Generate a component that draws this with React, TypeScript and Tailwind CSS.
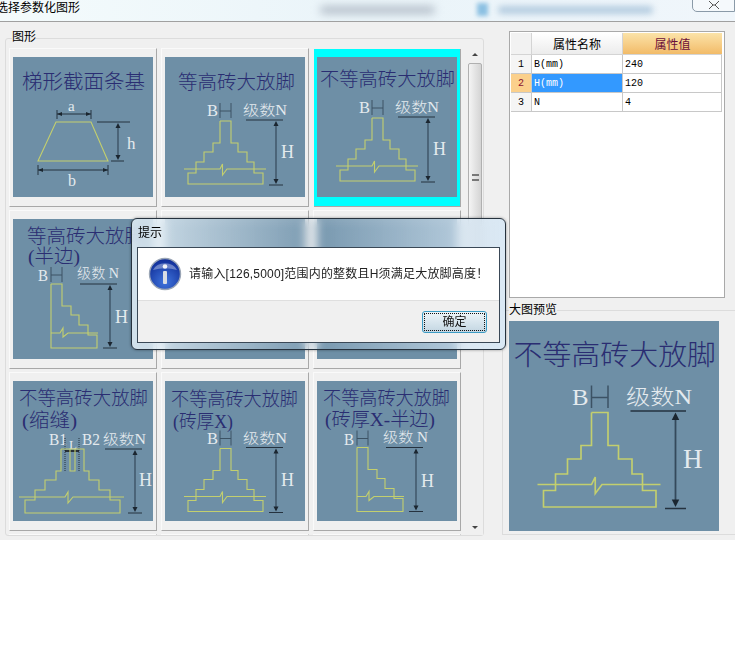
const YELLOW = "fill-none stroke-[#c3cf6e] stroke-[1.1]";
const serif = "font-['Liberation_Serif','Noto_Sans_CJK_SC',serif]";

const Title = ({ x, y, w, size = 19, children }: { x: number; y: number; w: number; size?: number; children: string }) => (
  <text x={x} y={y} fontSize={size} textLength={w} lengthAdjust="spacingAndGlyphs" className="fill-[#2a2d72] font-light">
    {children}
  </text>
);

const Label = ({ x, y, size = 16, w, children }: { x: number; y: number; size?: number; w?: number; children: string }) => (
  <text x={x} y={y} fontSize={size} textLength={w} lengthAdjust="spacingAndGlyphs" className="fill-[#e4eaee] font-light">
    {children}
  </text>
);

const VArrow = ({ x, y1, y2, t1, t2 }: { x: number; y1: number; y2: number; t1: number; t2: number }) => (
  <g>
    <line x1={t1} y1={y1} x2={x + 7} y2={y1} className="stroke-[#25323f]" />
    <line x1={x - 7} y1={y2} x2={t2} y2={y2} className="stroke-[#25323f]" />
    <line x1={x} y1={y1 + 3} x2={x} y2={y2 - 3} className="stroke-[#34495b] stroke-[1.2]" />
    <polygon points={`${x},${y1 + 1} ${x - 2.5},${y1 + 6} ${x + 2.5},${y1 + 6}`} className="fill-[#1b2630]" />
    <polygon points={`${x},${y2 - 1} ${x - 2.5},${y2 - 6} ${x + 2.5},${y2 - 6}`} className="fill-[#1b2630]" />
  </g>
);

const BDim = ({ x1, x2, y }: { x1: number; x2: number; y: number }) => (
  <g className="stroke-[#3c5264]">
    <line x1={x1} y1={y - 8} x2={x1} y2={y + 7} />
    <line x1={x2} y1={y - 8} x2={x2} y2={y + 7} />
    <line x1={x1} y1={y} x2={x2} y2={y} />
  </g>
);

// stepped footing, symmetric; dy moves it up or down in the picture
const Full = ({ dy = 0 }: { dy?: number }) => (
  <g transform={`translate(0 ${dy})`}>
    <Label x={42} y={59} w={11}>B</Label>
    <BDim x1={55} x2={66} y={54} />
    <Label x={78} y={58} size={14} w={44}>级数N</Label>
    <VArrow x={111} y1={63} y2={128} t1={81} t2={118} />
    <Label x={116} y={101} size={18}>H</Label>
    <polyline
      className={YELLOW}
      points="55,64 66,64 66,86 73,86 73,95 82,95 82,105 89,105 89,116 98,116 98,127 23,127 23,116 31,116 31,105 39,105 39,95 48,95 48,86 55,86 55,64"
    />
    <polyline className={YELLOW} points="19,112 55,112 57.5,107 57.5,118 62,112 101,112" />
  </g>
);

const Half = ({ dx = 0, dy = 0, spaced = false }: { dx?: number; dy?: number; spaced?: boolean }) => (
  <g transform={`translate(${dx} ${dy})`}>
    <Label x={25} y={62} w={10}>B</Label>
    <BDim x1={38} x2={49} y={56} />
    <Label x={64} y={59} size={14} w={spaced ? 45 : 42}>级数 N</Label>
    <VArrow x={97} y1={65} y2={129} t1={67} t2={104} />
    <Label x={102} y={104} size={18}>H</Label>
    <polyline
      className={YELLOW}
      points="38,65 49,65 49,87 58,87 58,96 66,96 66,106 75,106 75,116 84,116 84,129 38,129 38,65"
    />
    <polyline className={YELLOW} points="38,114 47,114 50,109 50,118 55,114 85,114" />
  </g>
);

const Trapezoid = () => (
  <g>
    <Title x={9} y={32} w={123} size={20}>梯形截面条基</Title>
    <Label x={55} y={54} size={15}>a</Label>
    <g className="stroke-[#25323f]">
      <line x1={44} y1={53} x2={44} y2={62} />
      <line x1={78} y1={53} x2={78} y2={62} />
      <line x1={44} y1={57} x2={78} y2={57} />
      <line x1={25} y1={108} x2={25} y2={118} />
      <line x1={95} y1={108} x2={95} y2={118} />
      <line x1={25} y1={113} x2={95} y2={113} />
    </g>
    <polygon points="44,57 49,55 49,59" className="fill-[#1b2630]" />
    <polygon points="78,57 73,55 73,59" className="fill-[#1b2630]" />
    <polygon points="25,113 30,111 30,115" className="fill-[#1b2630]" />
    <polygon points="95,113 90,111 90,115" className="fill-[#1b2630]" />
    <VArrow x={105} y1={65} y2={104} t1={84} t2={111} />
    <line x1={112} y1={65} x2={117} y2={65} className="stroke-[#25323f]" />
    <Label x={114} y={92} size={17}>h</Label>
    <Label x={55} y={129} size={16}>b</Label>
    <polygon points="43,65 78,65 95,104 25,104" className={YELLOW} />
  </g>
);

const Slot = () => (
  <g>
    <Label x={36} y={64} w={18}>B1</Label>
    <Label x={69} y={64} w={18}>B2</Label>
    <Label x={90} y={63} size={14} w={43}>级数N</Label>
    <Label x={56} y={68} size={13}>L</Label>
    <VArrow x={122} y1={68} y2={132} t1={92} t2={129} />
    <Label x={126} y={105} size={18}>H</Label>
    <line x1={52} y1={57} x2={52} y2={90} strokeDasharray="1 1" className="stroke-[#25323f]" />
    <line x1={66} y1={57} x2={66} y2={90} strokeDasharray="1 1" className="stroke-[#25323f]" />
    <line x1={52} y1={70} x2={66} y2={70} className="stroke-[#111] stroke-[1.5]" />
    <polyline
      className={YELLOW}
      points="48,68 71,68 71,90 76,90 76,99 86,99 86,109 97,109 97,119 107,119 107,132 12,132 12,119 22,119 22,109 32,109 32,99 43,99 43,90 48,90 48,68"
    />
    <polyline className={YELLOW} points="57,68 57,90 62,90 62,68" />
    <polyline className={YELLOW} points="6,116 52,116 55,111 55,122 60,116 111,116" />
  </g>
);

const Drawing = ({ size = 140, children }: { size?: number; children?: React.ReactNode }) => (
  <svg width={size} height={size} viewBox="0 0 140 140" className={`block bg-[#6e8fa6] ${serif}`}>
    {children}
  </svg>
);

const Card = ({ selected = false, children }: { selected?: boolean; children?: React.ReactNode }) => (
  <div
    className={
      selected
        ? "flex items-start justify-center pt-[8px] bg-[#00ffff] border-r border-b border-[#a8a8a8] ml-px mt-px"
        : "flex items-start justify-center pt-[8px] bg-[#f0f0f0] border-t border-l border-t-[#fafafa] border-l-[#fafafa] border-r border-b border-r-[#a8a8a8] border-b-[#a8a8a8]"
    }
  >
    {children}
  </div>
);

const rows = [
  { n: "1", name: "B(mm)", value: "240" },
  { n: "2", name: "H(mm)", value: "120" },
  { n: "3", name: "N", value: "4" },
];

const PropertyGrid = () => (
  <div className="h-[267px] w-[216px] border border-[#a9a9a9] bg-white p-px text-[10px] font-['Liberation_Mono','Noto_Sans_CJK_SC',monospace]">
    <div className="grid grid-cols-[21px_91px_99px] grid-rows-[22px_19px_19px_19px] text-black">
      <div className="bg-[#f2f2f2] border-r border-b border-[#d4d4d4]" />
      <div className="flex items-center justify-center bg-gradient-to-b from-white to-[#ececec] border-r border-b border-[#d4d4d4] font-['Noto_Sans_CJK_SC',sans-serif] text-xs">
        属性名称
      </div>
      <div className="flex items-center justify-center bg-gradient-to-b from-[#fbe3a8] to-[#f2bb68] border-b border-[#d4d4d4] font-['Noto_Sans_CJK_SC',sans-serif] text-xs text-[#6b0f3a]">
        属性值
      </div>
      {rows.map((r) => {
        const active = r.n === "2";
        return (
          <div key={r.n} className="contents">
            <div
              className={
                active
                  ? "flex items-center justify-center bg-[#fbd08c] text-[#8a1030] border-r border-b border-[#c8c8c8]"
                  : "flex items-center justify-center bg-[#f5f5f5] border-r border-b border-[#c8c8c8]"
              }
            >
              {r.n}
            </div>
            <div
              className={
                active
                  ? "flex items-center pl-[2px] bg-[#3399ff] text-white border-r border-b border-[#c8c8c8]"
                  : "flex items-center pl-[2px] border-r border-b border-[#c8c8c8]"
              }
            >
              {r.name}
            </div>
            <div className="flex items-center pl-[2px] border-r border-b border-[#c8c8c8]">{r.value}</div>
          </div>
        );
      })}
    </div>
  </div>
);

const InfoIcon = () => (
  <svg width="34" height="34" viewBox="0 0 34 34" className="shrink-0">
    <defs>
      <radialGradient id="infoBlue" cx="50%" cy="75%" r="70%">
        <stop offset="0%" stopColor="#3f74dc" />
        <stop offset="100%" stopColor="#12309a" />
      </radialGradient>
    </defs>
    <circle cx="17" cy="17" r="15.5" fill="url(#infoBlue)" stroke="#9aa5b5" strokeWidth="1.4" />
    <path d="M5 13 A13 11 0 0 1 29 13 A22 10 0 0 0 5 13 Z" fill="#ffffff" fillOpacity="0.35" />
    <circle cx="17" cy="9.5" r="2.3" fill="#f2f4f8" />
    <rect x="15" y="14" width="4" height="13" rx="1" fill="#d8dde4" />
  </svg>
);

const Dialog = () => (
  <div className="absolute left-[131px] top-[218px] flex h-[132px] w-[375px] flex-col rounded-[6px] border border-[#26323e] bg-gradient-to-r from-[#e4f0f8]/85 via-[#b9d4ea]/15 to-[#d5e6f4]/85 px-[5px] pb-[6px] shadow-[0_0_3px_rgba(0,0,0,0.4)] backdrop-blur-[5px]">
    <div className="flex h-[28px] shrink-0 items-center pl-px text-xs text-black">提示</div>
    <div className="flex flex-1 flex-col border border-[#3a4856] bg-[#f0f0f0]">
      <div className="flex h-[53px] items-center gap-[8px] bg-white pl-[10px] border-b border-[#dfdfdf] text-[12px] tracking-[0.2px] text-[#222]">
        <InfoIcon />
        <span className="ml-[-1px] whitespace-nowrap">请输入[126,5000]范围内的整数且H须满足大放脚高度！</span>
      </div>
      <div className="flex flex-1 items-center justify-end pr-[12px]">
        <button className="flex h-[22px] w-[65px] items-center justify-center rounded-[3px] border border-[#3c9cc4] bg-gradient-to-b from-[#eef6fa] to-[#c3d6e2] text-xs text-[#111] outline-1 -outline-offset-3 outline-dotted outline-[#111]">
          确定
        </button>
      </div>
    </div>
  </div>
);

const Scrollbar = () => (
  <div className="flex h-full w-[16px] shrink-0 flex-col items-center bg-[#f0f0f0] pt-[5px]">
    <div className="h-0 w-0 border-x-[3px] border-b-[3px] border-x-transparent border-b-[#444]" />
    <div className="mt-[7px] flex h-[228px] w-[14px] items-center justify-center rounded-[2px] border border-[#b0b0b0] bg-gradient-to-r from-[#f4f4f4] to-[#d4d4d4]">
      <div className="h-[7px] w-[7px] border-y-2 border-double border-[#777]" />
    </div>
    <div className="mt-auto mb-[6px] h-0 w-0 border-x-[3px] border-t-[3px] border-x-transparent border-t-[#444]" />
  </div>
);

const CloseGlyph = () => (
  <svg width="12" height="8" viewBox="0 0 12 8" className="block">
    <path d="M1 0 L5 4 L1 8 M11 0 L7 4 L11 8 M5 4 L7 4" fill="none" stroke="#555" />
  </svg>
);

export default function App() {
  return (
    <div className="relative h-[666px] w-[735px] overflow-hidden bg-white font-['Liberation_Sans','Noto_Sans_CJK_SC',sans-serif]">
      <div className="relative flex h-[22px] items-center overflow-hidden border-b border-[#a0a0a0] bg-gradient-to-r from-[#f4fbfc] via-[#eaf4f9] to-[#f0f6fb]">
        <span className="ml-[-4px] -mt-[6px] whitespace-nowrap text-[12px] text-black">选择参数化图形</span>
        <div className="ml-[240px] h-[8px] w-[115px] -mt-[2px] rounded bg-[#b5bfca] blur-[4px]" />
        <div className="ml-[42px] h-[13px] w-[11px] -mt-[2px] bg-[#8cc0e2] blur-[2px]" />
        <div className="ml-[10px] h-[8px] w-[155px] -mt-[2px] rounded bg-[#b4cce0] blur-[3px]" />
        <div className="absolute right-0 top-[-10px] flex h-[22px] w-[43px] items-end justify-center rounded-bl-[5px] border border-[#8a9aa8] bg-[#f5f9fc] pb-[2px]">
          <CloseGlyph />
        </div>
      </div>

      <div className="flex h-[518px] items-start bg-[#f0f0f0] pt-[16px]">
        <div className="ml-[5px] flex h-[498px] w-[479px] shrink-0 flex-col rounded-[3px] border border-[#dcdcdc]">
          <span className="-mt-[10px] ml-[6px] h-[19px] w-fit bg-[#f0f0f0] text-xs leading-[17px] text-black">图形</span>
          <div className="flex min-h-0 flex-1 pl-[3px]">
            <div className="grid h-full w-[452px] shrink-0 auto-rows-[159px] grid-cols-[148px_148px_148px] gap-x-[4px] gap-y-[3px] overflow-hidden">
              <Card>
                <Drawing><Trapezoid /></Drawing>
              </Card>
              <Card>
                <Drawing>
                  <Title x={13} y={32} w={117}>等高砖大放脚</Title>
                  <Full />
                </Drawing>
              </Card>
              <Card selected>
                <Drawing>
                  <Title x={3} y={29} w={135}>不等高砖大放脚</Title>
                  <Full dy={-3} />
                </Drawing>
              </Card>
              <Card>
                <Drawing>
                  <Title x={14} y={24} w={117}>等高砖大放脚</Title>
                  <Title x={15} y={44} w={52}>(半边)</Title>
                  <Half />
                </Drawing>
              </Card>
              <Card><Drawing /></Card>
              <Card><Drawing /></Card>
              <Card>
                <Drawing>
                  <Title x={6} y={24} w={129}>不等高砖大放脚</Title>
                  <Title x={9} y={46} w={55}>(缩缝)</Title>
                  <Slot />
                </Drawing>
              </Card>
              <Card>
                <Drawing>
                  <Title x={6} y={25} w={127}>不等高砖大放脚</Title>
                  <Title x={8} y={47} w={60}>(砖厚X)</Title>
                  <Full dy={3.5} />
                </Drawing>
              </Card>
              <Card>
                <Drawing>
                  <Title x={6} y={24} w={127}>不等高砖大放脚</Title>
                  <Title x={8} y={45} w={110}>(砖厚X-半边)</Title>
                  <Half dx={2} dy={1.5} spaced />
                </Drawing>
              </Card>
              <Card />
              <Card />
              <Card />
            </div>
            <div className="ml-[6px] flex-1"><Scrollbar /></div>
          </div>
        </div>

        <div className="ml-[18px] flex h-[504px] flex-1 flex-col -mt-[7px]">
          <div className="ml-[7px]">
            <PropertyGrid />
          </div>
          <div className="mt-[12px] flex flex-1 flex-col rounded-tl-[3px] border-t border-l border-b border-[#dcdcdc]">
            <span className="-mt-[9px] ml-[6px] h-[17px] w-fit bg-[#f0f0f0] text-xs leading-[17px] text-black">大图预览</span>
            <div className="ml-[6px] mt-[2px]">
              <Drawing size={210}>
                <Title x={3} y={29} w={135}>不等高砖大放脚</Title>
                <Full dy={-3} />
              </Drawing>
            </div>
          </div>
        </div>
      </div>

      <Dialog />
    </div>
  );
}
